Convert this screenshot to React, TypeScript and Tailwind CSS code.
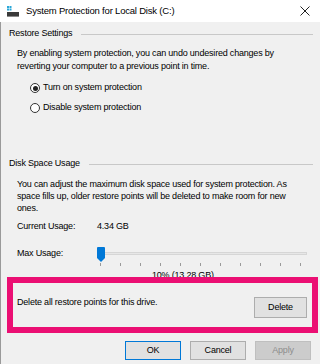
import React from "react";

function DriveIcon() {
  return (
    <svg width="14" height="12" viewBox="0 0 14 12">
      <rect x="1" y="0" width="2" height="2" fill="#2aa7d8" />
      <rect x="3.5" y="0" width="2" height="2" fill="#2aa7d8" />
      <rect x="1" y="2.5" width="2" height="2" fill="#2aa7d8" />
      <rect x="3.5" y="2.5" width="2" height="2" fill="#2aa7d8" />
      <rect x="1" y="6" width="12" height="4" fill="#3a3a3a" />
      <rect x="1" y="10" width="12" height="1" fill="#8a8a8a" />
    </svg>
  );
}

function Radio({ checked, label }: { checked?: boolean; label: string }) {
  return (
    <div className="flex h-[14px] items-center pl-[29px]">
      <div className="flex h-[10px] w-[10px] items-center justify-center rounded-full border border-[#333] bg-white">
        {checked && <div className="h-[5px] w-[5px] rounded-full bg-[#222]" />}
      </div>
      <span className="ml-[3px]">{label}</span>
    </div>
  );
}

function GroupLabel({ text }: { text: string }) {
  return (
    <div className="flex h-[16px] items-center pl-[8px] pr-[7px]">
      <span>{text}</span>
      <div className="ml-[9px] h-px flex-1 bg-[#c8c8c8]" />
    </div>
  );
}

export default function App() {
  const ticks = Array.from({ length: 11 }, (_, i) => i);
  return (
    <div
      className="relative h-[364px] w-[320px] overflow-hidden whitespace-nowrap bg-[#f0f0f0] text-[9px] tracking-[-0.2px] text-black"
      style={{ fontFamily: '"Liberation Sans", Arial, sans-serif' }}
    >
      <div className="flex h-[22px] items-center bg-white">
        <div className="ml-[6px] mt-[1px]">
          <DriveIcon />
        </div>
        <span className="ml-[6px] text-[9.5px]">System Protection for Local Disk (C:)</span>
        <div className="ml-auto mr-[10px]">
          <svg width="10" height="10" viewBox="0 0 10 10">
            <path d="M0.5 0.5 L9.5 9.5 M9.5 0.5 L0.5 9.5" stroke="#222" strokeWidth="1" />
          </svg>
        </div>
      </div>
      <div className="h-[342px] border-l border-[#9a9a9a]">
        <div className="h-[4px]" />
        <GroupLabel text="Restore Settings" />
        <div className="mt-[5px] h-[26px] pl-[16px] leading-[13px]">
          <div>By enabling system protection, you can undo undesired changes by</div>
          <div>reverting your computer to a previous point in time.</div>
        </div>
        <div className="mt-[8px]">
          <Radio checked label="Turn on system protection" />
        </div>
        <div className="mt-[6px]">
          <Radio label="Disable system protection" />
        </div>
        <div className="mt-[41px]">
          <GroupLabel text="Disk Space Usage" />
        </div>
        <div className="mt-[6px] h-[36px] pl-[16px] leading-[12px]">
          <div>You can adjust the maximum disk space used for system protection. As</div>
          <div>space fills up, older restore points will be deleted to make room for new</div>
          <div>ones.</div>
        </div>
        <div className="mt-[6px] flex h-[14px] items-center pl-[16px]">
          <span className="w-[80px]">Current Usage:</span>
          <span>4.34 GB</span>
        </div>
        <div className="mt-[12px] flex h-[16px] items-center pl-[16px]">
          <span className="w-[80px]">Max Usage:</span>
          <div className="relative h-[16px] flex-1">
            <div className="absolute left-[2px] top-[6px] h-[3px] w-[208px] border border-[#d6d6d6] bg-[#e7e7e7]" />
            <svg className="absolute left-0 top-[1px]" width="8" height="15" viewBox="0 0 8 15">
              <path d="M0 1 Q0 0 1 0 L7 0 Q8 0 8 1 L8 11 L4 15 L0 11 Z" fill="#0078d7" />
            </svg>
          </div>
        </div>
        <div className="relative mt-[1px] h-[3px]">
          {ticks.map((i) => (
            <div key={i} className="absolute top-0 h-[3px] w-px bg-[#9a9a9a]" style={{ left: 99 + i * 20 }} />
          ))}
        </div>
        <div className="mt-[4px] flex h-[12px] items-center pl-[151px]">10% (13.28 GB)</div>
        <div className="mt-[15px] flex h-[22px] items-start pl-[16px] pr-[13px]">
          <span className="mt-[-1px] leading-[12px]">Delete all restore points for this drive.</span>
          <button className="ml-auto h-[21px] w-[53px] border border-[#adadad] bg-[#e1e1e1] text-[9px]">Delete</button>
        </div>
        <div className="mt-[22px] flex h-[19px] justify-end gap-[9px] pr-[9px]">
          <button className="h-[19px] w-[56px] border border-[#0078d7] bg-[#e1e1e1] text-[9px]">OK</button>
          <button className="h-[19px] w-[56px] border border-[#adadad] bg-[#e1e1e1] text-[9px]">Cancel</button>
          <button className="h-[19px] w-[56px] border border-[#bfbfbf] bg-[#cccccc] text-[9px] text-[#8c8c8c]">Apply</button>
        </div>
      </div>
      <div className="absolute left-[7px] top-[277px] h-[56px] w-[311px] border-[6px] border-[#eb0f73]" />
    </div>
  );
}
